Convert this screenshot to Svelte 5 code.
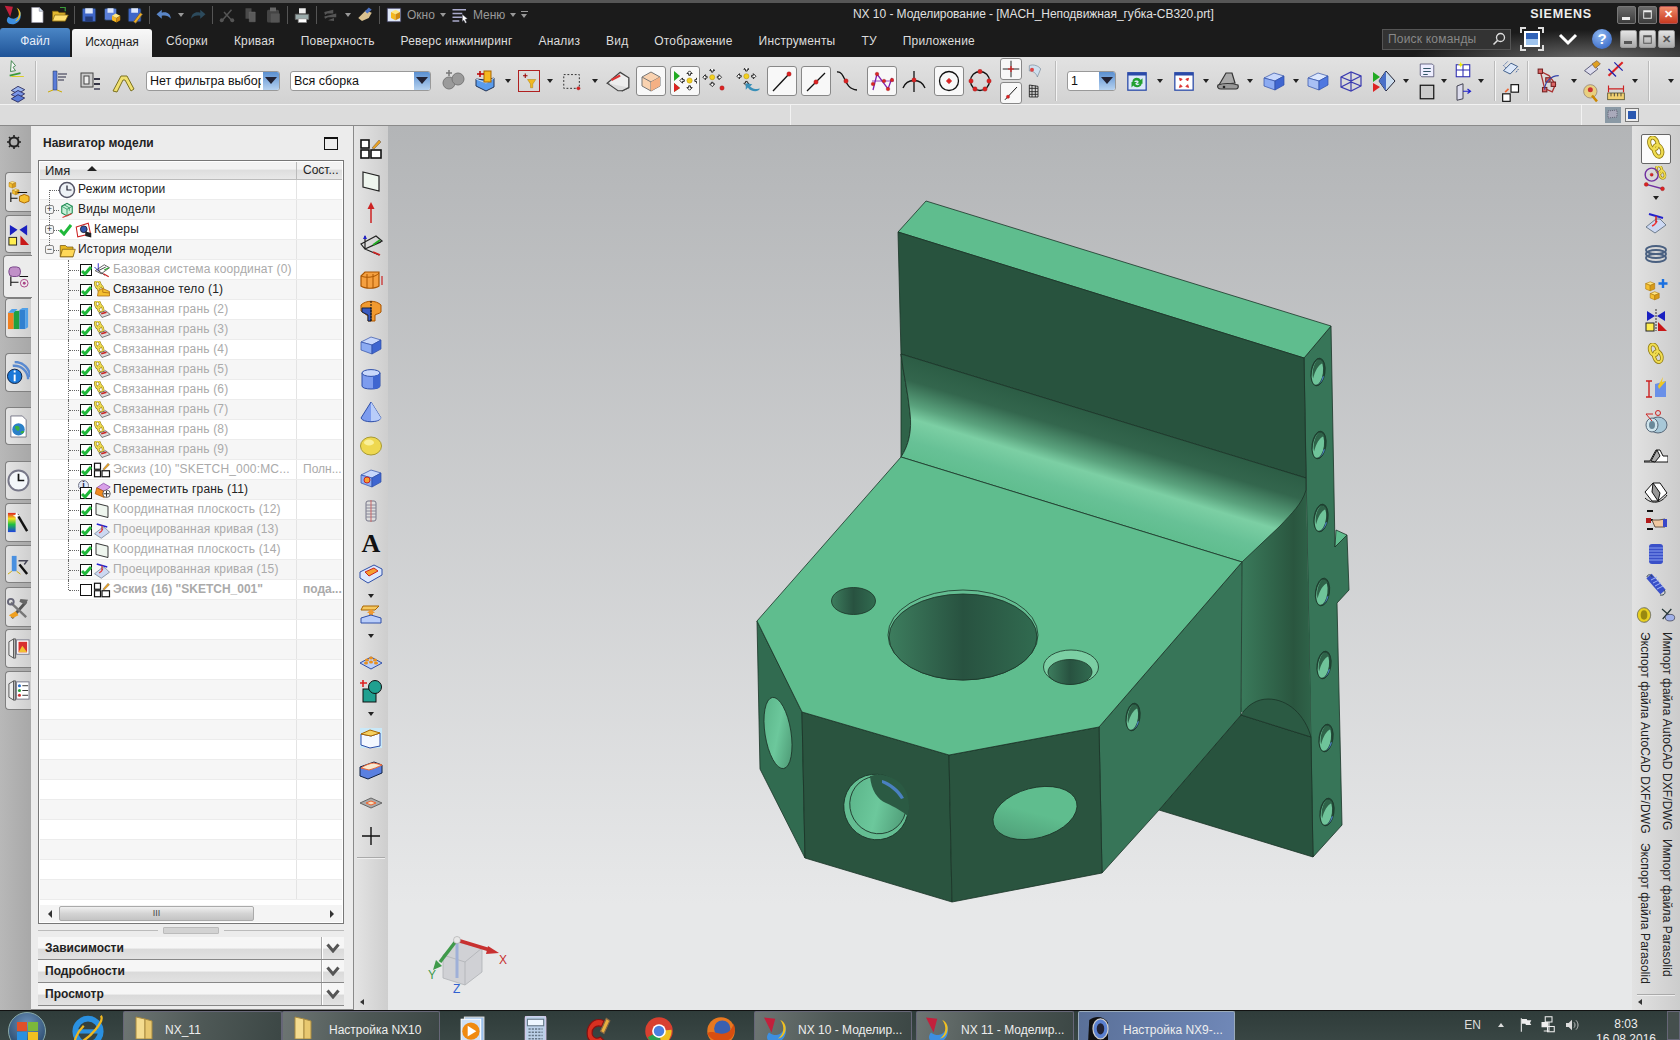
<script>
  // icon artwork, all drawn on a 24x24 grid
  const chain = (x, y, s) =>
    `<g transform="translate(${x} ${y}) scale(${s})" fill="none"><g stroke="#8f7a10" stroke-width="4.4"><ellipse cx="9" cy="8" rx="4.4" ry="6.6" transform="rotate(-18 9 8)"/><ellipse cx="14" cy="16" rx="4.4" ry="6.6" transform="rotate(-18 14 16)"/></g><g stroke="#f0dc50" stroke-width="2.6"><ellipse cx="9" cy="8" rx="4.4" ry="6.6" transform="rotate(-18 9 8)"/><ellipse cx="14" cy="16" rx="4.4" ry="6.6" transform="rotate(-18 14 16)"/></g></g>`;
  const cubeArt = (a, b, c, line) =>
    `<path fill="${a}" stroke="${line}" stroke-width=".7" d="M2 9l10-5 10 3-9 5z"/><path fill="${b}" stroke="${line}" stroke-width=".7" d="M2 9l11 3v9L2 17z"/><path fill="${c}" stroke="${line}" stroke-width=".7" d="M13 12l9-5v9l-9 5z"/>`;
  const cube = cubeArt("#c9d8fb", "#8cabf2", "#3f66d0", "#2f4fa8");
  const goldCubes = `<g stroke="#b07a10" stroke-width=".7"><path fill="#ffe680" d="M3 4l5-2 5 2-5 2z"/><path fill="#f5c030" d="M3 4l5 2v6l-5-2z"/><path fill="#d89a18" d="M8 6l5-2v6l-5 2z"/><path fill="#ffe680" d="M8 15l5-2 5 2-5 2z"/><path fill="#f5c030" d="M8 15l5 2v5l-5-2z"/><path fill="#d89a18" d="M13 17l5-2v5l-5 2z"/></g>`;
  const point = (x, y, r = 1.8) => `<circle cx="${x}" cy="${y}" r="${r}" fill="#d22" stroke="#922" stroke-width=".4"/>`;
  const arrows4 = `<g fill="#fff" stroke="#111" stroke-width="1"><path d="M12 1l3 3h-2v2h-2V4H9z"/><path d="M12 23l3-3h-2v-2h-2v2H9z"/><path d="M1 12l3-3v2h2v2H4v2z"/><path d="M23 12l-3-3v2h-2v2h2v2z"/></g><circle cx="12" cy="12" r="3" fill="#f2d020" stroke="#a80" stroke-width=".5"/>`;
  const sketchBox = `<g fill="#fff" stroke="#111" stroke-width="1.6"><rect x="2" y="3" width="8" height="8"/><rect x="2" y="13" width="8" height="8"/><rect x="12" y="13" width="10" height="8"/></g><path d="M13 11l7-8 2 2-7 7z" fill="#e8a020" stroke="#765" stroke-width=".6"/>`;
  const faceLink = `<g transform="translate(0 -1) scale(.72)">${chain(0, 0, 1)}</g><path d="M8 16l9-3 6 5-11 4z" fill="#ddd" stroke="#555"/><path d="M11 17l7-2" stroke="#c22" stroke-width="1.8"/>`;
  const plane = `<path d="M4 3l16 4v15L4 18z" fill="#eef5ee" stroke="#222" stroke-width="1.2"/>`;
  const projCurve = `<path d="M12 9L2 17l9 6 11-8-6-6z" fill="#ccd8f2" stroke="#567" stroke-width=".8"/><path d="M8 16c3-1 4-3 5-5" stroke="#e33" stroke-width="1.6" fill="none"/><path d="M5 4l14 4" stroke="#22c" stroke-width="2"/><path d="M12 6v6" stroke="#c22" stroke-width="1.5"/>`;
  const treeMark = (c) => `<path d="M4 12v10M4 18h7M11 12h10" stroke="#111" stroke-width="1.2" fill="none"/><g>${c}</g>`;

  const I = {
    nx: `<path d="M4 2l9 1-3 11z" fill="#c2203c"/><path d="M8 14c-4 5 0 9 6 8 6-1 9-7 7-14-1 6-6 11-13 6z" fill="#3d8fe0"/><path d="M17 4c4 5 3 12-2 15 7-1 9-12 2-15z" fill="#f2c020"/>`,
    page: `<path d="M5 2h10l5 5v15H5z" fill="#fff" stroke="#99a" stroke-width="1"/><path d="M15 2v5h5" fill="#cde" stroke="#99a"/>`,
    open: `<path d="M2 7h7l2 2h8v11H2z" fill="#e2b830" stroke="#8a6a10"/><path d="M5 12h18l-4 8H2z" fill="#ffe070" stroke="#8a6a10"/><path d="M12 2h7v5" fill="none" stroke="#3a9a3a" stroke-width="1.6"/>`,
    save: `<rect x="3" y="3" width="18" height="18" rx="2" fill="#3f66c8" stroke="#234"/><rect x="7" y="3" width="10" height="7" fill="#dfe8fa"/><rect x="7" y="14" width="10" height="7" fill="#233a78"/>`,
    saveall: `<rect x="2" y="3" width="16" height="16" rx="2" fill="#5b7fd8" stroke="#234"/><rect x="6" y="3" width="8" height="6" fill="#dfe8fa"/><path d="M12 13l5-3 6 3-5 3z" fill="#ffe680"/><path d="M12 13l6 3v6l-6-3z" fill="#f5b820"/><path d="M18 16l5-3v6l-5 3z" fill="#d08a10"/>`,
    saveas: `<rect x="3" y="3" width="17" height="18" rx="2" fill="#3f66c8" stroke="#234"/><rect x="7" y="3" width="9" height="6" fill="#dfe8fa"/><path d="M10 21l9-12 3 2-9 12z" fill="#f0b020" stroke="#654"/>`,
    undo: `<path d="M21 17c0-7-6-10-12-8V5L2 11l7 6v-4c5-1 9 0 12 4z" fill="#5a86c8"/>`,
    redo: `<path d="M3 17c0-7 6-10 12-8V5l7 6-7 6v-4c-5-1-9 0-12 4z" fill="#2c4a5c"/>`,
    cut: `<path d="M4 21l14-16M20 21L8 8" stroke="#555" stroke-width="2"/><circle cx="5" cy="19" r="2.6" fill="#555"/><circle cx="19" cy="19" r="2.6" fill="#555"/>`,
    copy: `<path d="M6 3h8v14H6z" fill="#4a4a4a"/><path d="M11 8h8v13h-8z" fill="#5a5a5a" stroke="#777" stroke-width=".5"/>`,
    paste: `<rect x="4" y="5" width="16" height="17" rx="2" fill="#444"/><rect x="8" y="2" width="8" height="5" fill="#666"/><rect x="9" y="10" width="12" height="12" fill="#555"/>`,
    print: `<path d="M8 3h9v7H8z" fill="#eee"/><path d="M3 11h18v7H3z" fill="#9aa" stroke="#666"/><path d="M7 17h11v5H7z" fill="#fff" stroke="#888"/>`,
    dim: `<path d="M3 8l12-3v5H7l-3 2zM3 14l16-4v5H8l-4 2zM8 19l8-3v4z" fill="#555"/>`,
    hand: `<path d="M3 16l10-10 8 3-4 7-9 4z" fill="#d8c090"/><path d="M12 7l5-5 4 3-6 5z" fill="#4a70c0"/>`,
    win: `<rect x="3" y="3" width="18" height="18" fill="#dfe8f8" stroke="#446"/><path d="M8 8l6-3 6 3-6 3z" fill="#ffe680"/><path d="M8 8l6 3v8l-6-3z" fill="#f5b820"/><path d="M14 11l6-3v8l-6 3z" fill="#d08a10"/>`,
    menu: `<path d="M2 4h18v2H2zM2 9h13v2H2zM2 14h13v2H2zM2 19h9v2H2z" fill="#aac"/><path d="M15 11l7 6-3 1 2 4-2 1-2-4-2 2z" fill="#fff" stroke="#223" stroke-width=".6"/>`,

    roles: `<path d="M4 2l5 6-3 2 3 4-6 1z" fill="#f8f8f8" stroke="#2a7a3a" stroke-width="1"/><path d="M2 20l13-3" stroke="#3a9a3a" stroke-width="2"/><path d="M4 21h15" stroke="#dc0" stroke-width="1"/>`,
    stack2: `<path d="M4 9l8-5 8 4-8 5z" fill="#9ab4ee" stroke="#225"/><path d="M4 14l8-5 8 4-8 5z" fill="#7a96e8" stroke="#225"/><path d="M4 19l8-5 8 4-8 5z" fill="#5a7cd8" stroke="#225"/>`,
    feat: `<path d="M8 2h4v19H8z" fill="#5a7cd8" stroke="#235" stroke-width=".5"/><path d="M8 21l-5 2M12 21l5 2" stroke="#ca0"/><path d="M13 5h9M13 8h8M13 11h6" stroke="#667" stroke-width="1.4"/>`,
    app: `<rect x="2" y="4" width="12" height="14" fill="#ccc" stroke="#444"/><rect x="5" y="7" width="5" height="8" fill="#eee" stroke="#444"/><path d="M15 10h6M15 15h6" stroke="#334" stroke-width="2"/><path d="M15 20h6" stroke="#667" stroke-width="2"/>`,
    bend: `<path d="M2 22l8-15h6l7 13-3 2-6-11h-2L6 23z" fill="#f0e070" stroke="#7a7020"/>`,
    gear2: `<g fill="#9a9a9a" stroke="#777"><circle cx="7" cy="14" r="6"/><circle cx="16" cy="10" r="6"/></g><path d="M7 1v6M4 4h6" stroke="#777" stroke-width="1.5"/>`,
    addsel: `<path d="M12 11l8-2v9l-8 4-10-5V10z" fill="#5a9cec" stroke="#235"/><path d="M2 10l10 4 8-5" fill="none" stroke="#cde" /><rect x="10" y="2" width="7" height="11" fill="#f5b820" stroke="#a60"/><path d="M3 5h7M6 2v6" stroke="#b00" stroke-width="1.5"/>`,
    filter: `<path d="M4 5h6M7 2v6" stroke="#900" stroke-width="1.4"/><path d="M10 10h11l-4 6v5h-3v-5z" fill="#f0b820" stroke="#a70" stroke-width=".6"/>`,
    rect: `<path d="M3 5h17v15H3z" fill="none" stroke="#222" stroke-dasharray="2 2"/>${point(19, 20)}`,
    tilt: `<path d="M2 14L14 4l8 5v9l-6 3z" fill="#eee" stroke="#444" stroke-width="1.2"/><path d="M2 14l10 7h4l6-3" fill="#ddd" stroke="#444"/><path d="M6 11l8-4" stroke="#d33" stroke-width="2"/>`,
    bbox: `<path d="M3 8l9-5 9 5v9l-9 5-9-5z" fill="#f9d2b0" stroke="#777"/><path d="M3 8l9 5 9-5M12 13v9" fill="none" stroke="#777"/><path d="M12 13l9-5v9l-9 5z" fill="#f4b084"/>`,
    snap: `<path d="M1 2l6 5-6 5zM1 14l6 5-6 4z" fill="#2a2"/><path d="M1 14l6 5-6 4z" fill="#d22"/><g transform="translate(6 1) scale(.88)">${arrows4}</g>`,
    snap2: `<g transform="translate(0 -2) scale(.85)">${arrows4}</g>${point(20, 19, 2.2)}`,
    snap3: `<g transform="translate(0 -2) scale(.8)">${arrows4}</g><path d="M22 19c-1 4-9 3-11-1l-2 2v-6l6 1-2 2c2 2 6 3 9 2z" fill="#3a90b8"/>`,
    lineEnd: `<path d="M3 22L19 5" stroke="#111" stroke-width="1.3"/>${point(19, 5, 2.2)}`,
    lineMid: `<path d="M3 22L21 4" stroke="#111" stroke-width="1.3"/>${point(12, 13, 2.2)}`,
    sCurve: `<path d="M2 3c9-1 6 17 20 18" stroke="#111" stroke-width="1.3" fill="none"/>${point(11, 12, 2.2)}`,
    polyPts: `<path d="M3 21l4-16 11 15 4-11" stroke="#8020b0" stroke-width="1.3" fill="none"/><path d="M2 12l22 0" stroke="#8020b0" stroke-width=".8"/>${point(7, 5)}${point(3, 15)}${point(14, 12)}${point(18, 20)}${point(22, 11)}`,
    arcX: `<path d="M1 19C5 9 19 9 23 19" fill="none" stroke="#111" stroke-width="1.3"/><path d="M12 2v21" stroke="#111" stroke-width="1.3"/>${point(12, 11, 2.2)}`,
    circC: `<circle cx="12" cy="12" r="9.5" fill="none" stroke="#111" stroke-width="1.3"/>${point(12, 12, 2)}<path d="M12 9v6M9 12h6" stroke="#d22"/>`,
    circP: `<circle cx="12" cy="12" r="9.5" fill="none" stroke="#111" stroke-width="1.3"/>${point(12, 2.5, 2.2)}${point(3, 12, 2.2)}${point(21, 12, 2.2)}${point(7, 20, 2.2)}${point(17, 20, 2.2)}`,
    cross: `<path d="M12 1v22M1 12h22" stroke="#111" stroke-width="1.2"/><path d="M12 8v8M8 12h8" stroke="#d22" stroke-width="1.6"/>`,
    lineSm: `<path d="M4 21L20 4" stroke="#111" stroke-width="1.3"/>${point(8, 17, 2.2)}`,
    shade: `<path d="M5 4c6-3 15 1 17 5l-5 12c-1-5-6-9-12-9z" fill="#cfe0ee" stroke="#789"/><circle cx="9" cy="10" r="3" fill="#d44"/>`,
    grid: `<path d="M5 3l13 2v16H5zM5 8h13M5 13h13M5 17h13M9 3v18M14 4v17" fill="none" stroke="#222" stroke-width="1.3"/>`,
    updateV: `<rect x="2" y="3" width="20" height="19" fill="#dce8fa" stroke="#2a4aa8" stroke-width="1.4"/><rect x="2" y="3" width="20" height="3" fill="#2a4aa8"/><path d="M7 13c0-5 7-6 9-2l2-2v6h-6l2-2c-1-2-4-2-5 0zM17 15c0 4-7 5-9 2l-2 2v-6h6l-2 2c1 2 4 2 5 0z" fill="#22a030"/>`,
    fit: `<rect x="2" y="3" width="20" height="19" fill="#fff" stroke="#2a4aa8" stroke-width="1.4"/><rect x="2" y="3" width="20" height="3" fill="#2a4aa8"/><path d="M7 9l3 1-2 2zM17 9l-3 1 2 2zM7 19l3-1-2-2zM17 19l-3-1 2-2z" fill="#d33" stroke="#d33"/>`,
    camSurf: `<path d="M3 16l7-12h6l3 10z" fill="#aaa" stroke="#333" stroke-width="1.2"/><path d="M2 16c5-2 14-2 20 0 1 3-1 4-2 4H5c-3 0-4-2-3-4z" fill="#999" stroke="#333" stroke-width="1.2"/><circle cx="8" cy="18" r="1.3" fill="#222"/>`,
    cube,
    cubeLight: cubeArt("#dce7fd", "#a9c0f4", "#4f78e0", "#2f4fa8"),
    wire: `<g fill="none" stroke="#3a3ab0" stroke-width="1.2"><path d="M2 8l10-5 10 4v10l-10 5-10-4z"/><path d="M2 8l10 4 10-5M12 12v10M2 18l10-5 10 4M12 3v10"/></g>`,
    orient: `<path d="M1 3l7 5-7 5z" fill="#2a2"/><path d="M1 14l7 4-7 5z" fill="#d22"/><path d="M14 2l9 10-9 10-7-10z" fill="#cde" stroke="#223"/><path d="M14 2l-7 10 7 10z" fill="#4a70c8"/>`,
    views: `<path d="M3 4h16l2 2v15H5l-2-2z" fill="#eef" stroke="#446"/><path d="M7 10h10M7 14h10M7 18h6" stroke="#356" stroke-width="1.5"/>`,
    winGrid: `<rect x="3" y="5" width="18" height="16" fill="#fff" stroke="#2a2ab0" stroke-width="1.4"/><path d="M3 12h18M12 5v16" stroke="#2a2ab0" stroke-width="1.4"/><path d="M9 1l1 3 3 1-3 1-1 3-1-3-3-1 3-1z" fill="#ee0"/>`,
    blank: `<rect x="3" y="3" width="18" height="18" fill="#ccc" stroke="#111" stroke-width="1.6"/>`,
    door: `<path d="M4 4l8-3v20l-8 2z" fill="#dde" stroke="#334" stroke-width="1.2"/><path d="M12 11h9M18 8l4 3-4 3" fill="none" stroke="#22c" stroke-width="1.6"/>`,
    moveV: `<path d="M3 14L12 5l8 4-9 9z" fill="#dce8fa" stroke="#247"/><path d="M8 3l-5 5 3 3M21 12l-3 4" fill="none" stroke="#359" stroke-dasharray="2 1"/>`,
    ortho: `<rect x="12" y="2" width="9" height="9" fill="#fff" stroke="#111" stroke-width="1.4"/><rect x="2" y="13" width="9" height="9" fill="#fff" stroke="#111" stroke-width="1.4"/><path d="M5 11l4-4" stroke="#e63" stroke-width="2"/>`,
    graph: `<path d="M4 3l8 4 6 8-3 7-7-3z" fill="none" stroke="#a33" stroke-width="1.2"/><g fill="#d66" stroke="#722"><rect x="2" y="1" width="4" height="4"/><rect x="14" y="13" width="4" height="4"/><rect x="6" y="18" width="4" height="4"/><rect x="9" y="9" width="4" height="4"/></g><path d="M8 20A13 13 0 0 1 21 7" fill="none" stroke="#34a"/>`,
    eyeKey: `<path d="M3 14L13 6l6 6-9 7z" fill="#dde" stroke="#446"/><path d="M12 6l6-4 4 4-6 5z" fill="#e0a020" stroke="#864"/>`,
    wheel: `<circle cx="10" cy="10" r="8" fill="#e8d080" stroke="#987"/><circle cx="10" cy="8" r="3" fill="#c33"/><path d="M12 15l6 7" stroke="#c80" stroke-width="3"/>`,
    dimDbl: `<path d="M3 20L20 4" stroke="#d22" stroke-width="2.5"/><path d="M3 12l9 9M10 4l10 10" stroke="#22a" stroke-width="1.5"/>`,
    ruler: `<rect x="2" y="12" width="20" height="8" fill="#f0d070" stroke="#553"/><path d="M6 12v4M10 12v4M14 12v4M18 12v4" stroke="#333"/><path d="M3 7h18M3 3v8M21 3v8" stroke="#c22" stroke-width="1.4"/>`,

    clock: `<circle cx="12" cy="12" r="10" fill="#eef2f6" stroke="#556" stroke-width="2"/><path d="M12 6v6h6" stroke="#223" stroke-width="1.6" fill="none"/>`,
    viewsT: `<path d="M5 7l7-4 7 4v9l-7 4-7-4z" fill="#c8f0d8" stroke="#1a8a50" stroke-width="1.4"/><path d="M5 7l7 4 7-4M12 11v9M8 5l7 4v4" fill="none" stroke="#1a8a50"/><path d="M6 22l12-5" stroke="#d33" stroke-width="1.5"/>`,
    camT: `<path d="M3 8l16-5 3 14-17 4z" fill="#fff" stroke="#c22" stroke-width="1.4"/><circle cx="13" cy="11" r="4.5" fill="#35a" stroke="#112"/><path d="M15 14l8 2v6l-8-2z" fill="#222"/>`,
    folder: `<path d="M3 6h7l2 2h8v13H3z" fill="#e8b820" stroke="#7a5a10"/><path d="M3 21l3-10h17l-3 10z" fill="#ffd858" stroke="#7a5a10"/>`,
    datum: `<path d="M7 3v10M7 13l-5-5" stroke="#22c" stroke-width="1.2"/><path d="M7 13l10-5M7 13l9 6" stroke="#333" stroke-width="1.2"/><path d="M3 13l12-8 7 4-11 8z" fill="none" stroke="#333"/><path d="M14 17l7 4" stroke="#c22" stroke-width="1.6"/><path d="M15 12l6-3" stroke="#2a2" stroke-width="1.6"/>`,
    linkBody: `<g transform="translate(0 -1) scale(.72)">${chain(0, 0, 1)}</g><path d="M7 13l6-3 9 4v6H6z" fill="#f5c030" stroke="#a86a10"/><path d="M13 10v5l9 1" fill="none" stroke="#a86a10"/>`,
    faceLink,
    sketch: sketchBox,
    move: `<path d="M5 9l9-6 9 5-8 6z" fill="#d8a0e8" stroke="#84a"/><path d="M5 9l10 5v8L3 17z" fill="#f08a20" stroke="#a50"/><circle cx="18" cy="17" r="5" fill="#fff" stroke="#333"/><path d="M18 13v8M14 17h8" stroke="#333" stroke-width="1.4"/>`,
    plane,
    proj: projCurve,

    datumTool: `<path d="M6 3v13M6 16l16-7M6 16l14 6M2 11l15-8 6 5-17 8z" fill="none" stroke="#222" stroke-width="1.2"/><path d="M6 2l-2 4h4z" fill="#22c"/><path d="M14 12l7-5" stroke="#2a2" stroke-width="1.8"/><path d="M14 19l7 3" stroke="#c22" stroke-width="1.8"/>`,
    arrowUp: `<path d="M12 23V7" stroke="#c22" stroke-width="1.5"/><path d="M8.5 9l3.5-7 3.5 7z" fill="#c22"/>`,
    extrude: `<path d="M2 8l4-4h14v14c-4 3-14 3-18 0z" fill="#f5a040" stroke="#a50" stroke-width="1.2"/><path d="M2 8c4 2 14 2 18-3M8 6v14M14 6v14" fill="none" stroke="#a50"/><path d="M23 8v9" stroke="#c22" stroke-width="1.2"/>`,
    revolve: `<path d="M2 6c5-5 15-5 20 0v7c-2 2-5 2-6 3v6H9v-5L2 12z" fill="#f09a30" stroke="#a50"/><path d="M3 9h9v13H9v-6L3 13z" fill="#3a5ac0" stroke="#124"/><path d="M12 2v21" stroke="#111" stroke-dasharray="2 1"/>`,
    cyl: `<path d="M3 6v13c0 4 18 4 18 0V6z" fill="#7d9cee" stroke="#2f4fa8"/><ellipse cx="12" cy="6" rx="9" ry="3.4" fill="#c9d8fb" stroke="#2f4fa8"/><path d="M14 9v13c4 0 7-1 7-3V6c0 1-3 3-7 3z" fill="#3f66d0"/>`,
    cone: `<path d="M12 2L2 18c2 5 18 5 20 0z" fill="#7d9cee" stroke="#2f4fa8"/><path d="M12 2v19c5 0 9-1 10-3z" fill="#b9cdf9"/>`,
    sphere: `<ellipse cx="12" cy="12" rx="10.5" ry="9" fill="#eed850" stroke="#a89a30"/><ellipse cx="10" cy="8.5" rx="5" ry="3" fill="#faf09a"/>`,
    block: `${cube}<circle cx="8" cy="14" r="3" fill="#f5a030" stroke="#c22"/>`,
    thread: `<rect x="7" y="2" width="10" height="20" rx="2" fill="#ddd" stroke="#778"/><path d="M7 6h10M7 9h10M7 12h10M7 15h10M7 18h10" stroke="#889"/><path d="M12 1v22" stroke="#c66"/>`,
    pocket: `<path d="M1 10l14-7 8 4v6L9 21l-8-5z" fill="#dce7fd" stroke="#2f4fa8"/><path d="M6 10l9-4 4 3-9 5z" fill="#f5a030" stroke="#c22"/>`,
    pad: `<path d="M4 4h16l-4 4H2z" fill="#f5c860" stroke="#a60"/><path d="M12 7l4 4h-2v5h-4v-5H8z" fill="#f09a30"/><path d="M2 16l10-3 10 3v5H2z" fill="#b9cdf9" stroke="#2f4fa8"/>`,
    pattern: `<path d="M1 15l11-6 11 6-11 6z" fill="#bcd0f8" stroke="#2f4fa8"/><g fill="#e89020"><ellipse cx="8" cy="12" rx="2" ry="1.6"/><ellipse cx="12" cy="10" rx="2" ry="1.6"/><ellipse cx="16" cy="12" rx="2" ry="1.6"/><ellipse cx="12" cy="14" rx="2" ry="1.6"/><ellipse cx="7" cy="15" rx="2" ry="1.6"/><ellipse cx="17" cy="15" rx="2" ry="1.6"/></g>`,
    unite: `<rect x="4" y="10" width="13" height="13" fill="#20a090" stroke="#111"/><circle cx="16" cy="8" r="6.5" fill="#20a090" stroke="#111"/><path d="M1 4h7M4 1v7" stroke="#d22" stroke-width="1.6"/>`,
    shell: `<path d="M1 2h22v20H1z" fill="#c9e8f8"/><path d="M2 8l10 2 9-3v13l-10 2-9-3z" fill="#f4f8ff" stroke="#2f4fa8"/><path d="M2 8l9-4 10 3-9 3z" fill="#f5d060" stroke="#a60"/>`,
    chamf: `<path d="M1 9l14-5 8 3v8L9 21l-8-3z" fill="#5a80e0" stroke="#124"/><path d="M2 10c4-3 10-5 13-5l8 2c-4 2-9 4-13 5z" fill="#f8e8d0" stroke="#e63"/>`,
    flat: `<path d="M1 12l11-5 11 5-11 5z" fill="#aaa" stroke="#666"/><path d="M7 12l5-2 5 2-5 2z" fill="#f8e0c0" stroke="#e63"/>`,
    plus: `<path d="M12 3v18M3 12h18" stroke="#111" stroke-width="1.4"/>`,

    link: chain(2, 0, 0.85),
    linkCirc: `<g transform="translate(10 -1) scale(.55)">${chain(0, 0, 1)}</g><circle cx="8" cy="8" r="6" fill="none" stroke="#7030a0" stroke-width="1.3"/>${point(8, 8, 1.4)}<path d="M3 17l15 4" stroke="#7030a0" stroke-width="1.2"/>${point(3, 17)}${point(18, 21)}`,
    coil: `<g fill="none" stroke="#4a6080" stroke-width="1.8"><ellipse cx="12" cy="7" rx="10" ry="4"/><ellipse cx="12" cy="11" rx="10" ry="4"/><ellipse cx="12" cy="15" rx="10" ry="4"/></g>`,
    assyAdd: `<g transform="translate(-1 3) scale(.9)">${goldCubes}</g><path d="M19 2v9M14.5 6.5h9" stroke="#1a70e0" stroke-width="2.4"/>`,
    mirror: `<path d="M3 3l8 5-8 5zM21 3l-8 5 8 5z" fill="#1a20c0"/><rect x="2" y="15" width="8" height="8" fill="#ffee50" stroke="#222"/><path d="M14 14l9 9h-9z" fill="#c81818"/><path d="M12 1v22" stroke="#333" stroke-dasharray="2 1"/>`,
    sizeLink: `<path d="M11 8l11-3v16H11z" fill="#6a90e8"/><path d="M14 10L19 1l-1 5 4-1-7 8z" fill="#f0c820"/><path d="M2 5h6M5 5v16M2 21h6" stroke="#c22" stroke-width="1.4"/>`,
    pipe: `<ellipse cx="14" cy="15" rx="9" ry="8" fill="#a8c8d8" stroke="#567"/><ellipse cx="8" cy="15" rx="6" ry="7" fill="#d0e4ec" stroke="#567"/><ellipse cx="8" cy="15" rx="3" ry="4" fill="#6a8899"/><path d="M2 4l6 7M2 4h7" stroke="#c22"/><circle cx="14" cy="3" r="2.5" fill="none" stroke="#c22"/>`,
    slot1: `<path d="M0 16h6l6-11h4l3 6h5v6H0z" fill="#fff" stroke="#111"/><path d="M7 16l6-11 3 6-5 6z" fill="#aaa" stroke="#111"/>`,
    slot2: `<path d="M1 12l8-9h7l7 10-9 8H8z" fill="#fff" stroke="#111"/><path d="M9 3l7 10-2 8-6-9z" fill="#999" stroke="#111"/><path d="M1 18c6 6 16 6 22-3" fill="none" stroke="#111"/>`,
    pick: `<path d="M3 3h6M3 12h6M3 21h6" stroke="#111" stroke-width="2"/><rect x="2" y="10" width="5" height="5" fill="#b01818"/><path d="M8 12h7l6-1v8H11z" fill="#f0c8a0" stroke="#654"/><rect x="19" y="11" width="4" height="8" fill="#3a48c8"/>`,
    spring: `<rect x="5" y="2" width="14" height="20" rx="3" fill="#3a50c8"/><path d="M5 6h14M5 9h14M5 12h14M5 15h14M5 18h14" stroke="#8aa0f0"/>`,
    spring2: `<path d="M5 3l14 16" stroke="#3a50c8" stroke-width="7"/><path d="M7 7l6-3M9 10l6-3M11 13l6-3M13 16l6-3" stroke="#a0b4f8" stroke-width="1"/><path d="M3 4c0-3 5-3 5 0M16 22c5 1 6-3 4-5" fill="none" stroke="#345"/>`,
    impA: `<ellipse cx="12" cy="12" rx="10" ry="11" fill="#e8d020" stroke="#554"/><ellipse cx="12" cy="12" rx="5" ry="7" fill="#998810"/><path d="M12 1c5 0 10 5 10 11s-5 11-10 11" fill="none" stroke="#887"/>`,
    impB: `<path d="M3 3l16 14M17 3L4 18" stroke="#233" stroke-width="1.8"/><ellipse cx="15" cy="16" rx="7" ry="5" fill="#a0b0e8" stroke="#334"/>`,

    rAsm: `<g transform="translate(0 -1) scale(.7)">${goldCubes}</g>${treeMark(`<path d="M13 16l5-2 5 2v5l-5 2-5-2z" fill="#f5c030" stroke="#a60"/>`)}`,
    rCon: `<path d="M3 2l8 5-8 6zM21 2l-8 5 8 6z" fill="#1a20c0"/><rect x="2" y="15" width="8" height="8" fill="#ffee50" stroke="#222"/><path d="M14 13l9 10h-9z" fill="#c81818"/>`,
    rPart: `<rect x="2" y="2" width="12" height="10" rx="4" fill="#c090c8" stroke="#748"/><path d="M13 12h9M4 12v10M4 18h8" stroke="#111" stroke-width="1.2" fill="none"/><circle cx="18" cy="19" r="4" fill="none" stroke="#a48"/><circle cx="18" cy="19" r="1.5" fill="#a48"/>`,
    rBooks: `<rect x="1" y="6" width="6" height="17" fill="#f08020"/><rect x="7" y="4" width="6" height="19" fill="#20a040"/><rect x="13" y="3" width="6" height="20" fill="#3080d0"/><path d="M1 6l4-4h6l-4 4zM13 3l3-2h6v20l-3 2V3z" fill="#50a0e8"/>`,
    rInfo: `<circle cx="8" cy="16" r="7.5" fill="#1a78d8" stroke="#124"/><path d="M7 10h2v2H7zM7 14h2v7H7z" fill="#fff"/><path d="M6 5c9-1 16 6 16 14M8 1c9 0 16 7 16 16" fill="none" stroke="#5a8ad0" stroke-width="2.5"/>`,
    rWeb: `<path d="M4 1h12l4 4v18H4z" fill="#fff" stroke="#778"/><circle cx="12" cy="15" r="6.5" fill="#2a80c8"/><path d="M8 12c3-2 6 0 5 3s-4 1-5-3zM14 18c2-2 3-1 4-1-1 3-3 3-4 1z" fill="#3ab040"/>`,
    rClock: `<circle cx="12" cy="12" r="10.5" fill="#f4f7fa" stroke="#778" stroke-width="2"/><path d="M12 5v7h6" stroke="#111" stroke-width="1.8" fill="none"/>`,
    rRoles: `<defs><linearGradient id="rb" x1="0" y1="0" x2="0" y2="1"><stop offset="0" stop-color="#e02020"/><stop offset=".3" stop-color="#f0e020"/><stop offset=".6" stop-color="#20c040"/><stop offset="1" stop-color="#2040e0"/></linearGradient></defs><rect x="1" y="2" width="8" height="20" fill="url(#rb)"/><path d="M11 4l10 17" stroke="#111" stroke-width="2.6"/><path d="M10 1l1 3 3 1-3 1-1 3-1-3-3-1 3-1z" fill="#fff"/>`,
    rReuse: `<path d="M5 3h5v16H5z" fill="#4a90e0"/><path d="M5 19l-4 3M10 19l4 3" stroke="#ca0"/><path d="M12 8h9l-3 4" fill="none" stroke="#445" stroke-width="1.5"/><path d="M13 12l8 10" stroke="#111" stroke-width="2.5"/>`,
    rTools: `<path d="M5 23L20 6" stroke="#555" stroke-width="3"/><path d="M14 3l8 1-3 5-6-3z" fill="#666"/><path d="M4 7l16 15" stroke="#777" stroke-width="2.5"/><circle cx="4" cy="6" r="3" fill="none" stroke="#667" stroke-width="2"/><path d="M2 20l7-4 3 4-6 3z" fill="#f0a020"/>`,
    rDoorA: `<path d="M2 5l5-3v20l-5-3zM7 2h2v20H7z" fill="#eee" stroke="#555"/><rect x="10" y="3" width="13" height="15" fill="#fff" stroke="#778"/><rect x="12" y="5" width="9" height="11" fill="#d83030"/><path d="M12 16l4-7 5 7z" fill="#f0c030"/>`,
    rDoorB: `<path d="M2 5l5-3v20l-5-3zM7 2h2v20H7z" fill="#eee" stroke="#555"/><rect x="10" y="3" width="13" height="18" fill="#fff" stroke="#778"/><circle cx="13" cy="7" r="1.6" fill="#2a70d0"/><circle cx="13" cy="12" r="1.6" fill="#2aa040"/><circle cx="13" cy="17" r="1.6" fill="#d03030"/><path d="M16 7h6M16 12h6M16 17h6" stroke="#333"/>`,

    ie: `<ellipse cx="12" cy="13" rx="9" ry="9" fill="none" stroke="#2a90e0" stroke-width="4"/><path d="M4 13h16" stroke="#2a90e0" stroke-width="3"/><path d="M21 2c3 3-7 16-17 20-3-1 0-8 5-13" fill="none" stroke="#f0b820" stroke-width="1.6"/>`,
    tFolder: `<path d="M4 2l9 2v20H4z" fill="#f4dc90" stroke="#a88a40"/><path d="M13 4l7 2v18h-7z" fill="#e8c870" stroke="#a88a40"/>`,
    media: `<rect x="5" y="1" width="18" height="23" fill="#9ac0ec" stroke="#ddd"/><rect x="2" y="3" width="18" height="23" fill="#cfe0f6" stroke="#fff"/><circle cx="11" cy="14" r="8" fill="#f08a10"/><path d="M8 9l8 5-8 5z" fill="#fff"/>`,
    calc: `<rect x="3" y="0" width="19" height="26" rx="2" fill="#bcd0e8" stroke="#dce"/><rect x="5" y="3" width="15" height="6" fill="#eef6ff" stroke="#678"/><path d="M6 12h13M6 15h13M6 18h13M6 21h13" stroke="#678" stroke-width="1.6" stroke-dasharray="2 1"/>`,
    cc: `<path d="M18 4C8 0 2 10 4 18c2 6 10 7 14 3l-3-3c-3 2-6 1-7-2-1-5 3-9 8-7z" fill="#d83020" stroke="#811"/><path d="M20 2l-5 11 3 2 5-11z" fill="#e8b040" stroke="#864"/>`,
    chrome: `<circle cx="12" cy="12" r="11" fill="#d84030"/><path d="M12 12L3 17a11 11 0 0 0 11 6z" fill="#2aa050"/><path d="M12 12l10-1a11 11 0 0 1-8 12z" fill="#f0c020"/><circle cx="12" cy="12" r="5.5" fill="#fff"/><circle cx="12" cy="12" r="4.2" fill="#4a80e0"/>`,
    ff: `<circle cx="12" cy="12" r="11" fill="#e87820"/><circle cx="13" cy="10" r="6.5" fill="#3a60b0"/><path d="M1 14c3 6 12 9 19 4 3-3 4-8 2-12-1 6-6 9-11 8S3 12 1 14z" fill="#d84e10"/>`,
    nxcam: `<path d="M5 4c5-4 12-3 15 2v17H4z" fill="#111"/><ellipse cx="14" cy="11" rx="6" ry="8" fill="#5a80d0" stroke="#ccc"/><ellipse cx="14" cy="11" rx="3" ry="4.5" fill="#223"/>`,
    flag: `<path d="M5 2v20" stroke="#eee" stroke-width="1.6"/><path d="M6 3h7l1 2h6l-2 4 2 3h-8l-1-2H6z" fill="#eee"/>`,
    net: `<rect x="7" y="1" width="9" height="7" fill="none" stroke="#eee" stroke-width="1.4"/><rect x="2" y="8" width="9" height="7" fill="#eee"/><path d="M12 8v12M12 20H5" stroke="#eee" stroke-width="1.4"/><rect x="10" y="14" width="9" height="7" fill="none" stroke="#eee" stroke-width="1.4"/>`,
    vol: `<path d="M3 9h4l5-5v16l-5-5H3z" fill="#ddd"/><path d="M15 8c2 2 2 6 0 8M18 5c4 4 4 10 0 14" fill="none" stroke="#ddd" stroke-width="1.2"/>`
  };

  // top toolbar: every item is placed by the x of its centre
  const rawBar = [
    { k: "stack", a: "roles", b: "stack2", c: 18, w: 20, s: 20 },
    { k: "sep", c: 35 },
    { i: "feat", c: 57, s: 24 }, { i: "app", c: 91, s: 24 }, { i: "bend", c: 123, s: 24 },
    { k: "select", t: "Нет фильтра выбор", c: 213, w: 134 },
    { k: "select", t: "Вся сборка", c: 360, w: 141 },
    { i: "gear2", c: 454, s: 24 }, { i: "addsel", c: 486, s: 24 }, { k: "arrow", c: 508 },
    { i: "filter", c: 529, s: 22, red: true }, { k: "arrow", c: 550 },
    { i: "rect", c: 572, s: 22 }, { k: "arrow", c: 595 },
    { i: "tilt", c: 618, s: 26 }, { i: "bbox", c: 651, box: true }, { i: "snap", c: 685, box: true },
    { i: "snap2", c: 714, s: 24 }, { i: "snap3", c: 749, s: 26 },
    { i: "lineEnd", c: 782, box: true }, { i: "lineMid", c: 816, box: true }, { i: "sCurve", c: 847, s: 24 },
    { i: "polyPts", c: 882, box: true }, { i: "arcX", c: 914, s: 24 }, { i: "circC", c: 949, box: true }, { i: "circP", c: 980, s: 24 },
    { k: "boxstack", a: "cross", b: "lineSm", c: 1011, w: 24 },
    { k: "stack", a: "shade", b: "grid", c: 1034, w: 18, s: 16 },
    { k: "sep", c: 1055 },
    { k: "select", t: "1", c: 1091, w: 49 },
    { i: "updateV", c: 1137, s: 22 }, { k: "arrow", c: 1160 },
    { i: "fit", c: 1184, s: 22 }, { k: "arrow", c: 1206 },
    { i: "camSurf", c: 1228, s: 24 }, { k: "arrow", c: 1250 },
    { i: "cube", c: 1274, s: 24 }, { k: "arrow", c: 1296 },
    { i: "cubeLight", c: 1318, s: 24 }, { i: "wire", c: 1351, s: 24 }, { i: "orient", c: 1384, s: 24 }, { k: "arrow", c: 1406 },
    { k: "stack", a: "views", b: "blank", c: 1427, w: 18, s: 18 }, { k: "arrow", c: 1444 },
    { k: "stack", a: "winGrid", b: "door", c: 1463, w: 18, s: 18 }, { k: "arrow", c: 1481 },
    { k: "sep", c: 1494 },
    { k: "stack", a: "moveV", b: "ortho", c: 1511, w: 20, s: 20 },
    { k: "sep", c: 1527 },
    { i: "graph", c: 1549, s: 26 }, { k: "arrow", c: 1574 },
    { k: "stack", a: "eyeKey", b: "wheel", c: 1592, w: 20, s: 20 },
    { k: "stack", a: "dimDbl", b: "ruler", c: 1616, w: 20, s: 20 }, { k: "arrow", c: 1635 },
    { k: "sep", c: 1648 }, { k: "arrow", c: 1671 }
  ];
  const widthOf = (it) => it.w ?? (it.k === "sep" ? 1 : it.k === "arrow" ? 6 : it.box ? 30 : it.red ? 22 : it.s);
  let right = 0;
  const bar = rawBar.map((it) => {
    const w = widthOf(it);
    const gap = Math.round(it.c - w / 2 - right);
    right += gap + w;
    return { ...it, w, gap };
  });

  const quick = [
    ["nx", 22], ["page"], ["open"], "|", ["save"], ["saveall"], ["saveas"], "|", ["undo"], "v", ["redo"], "|",
    ["cut"], ["copy"], ["paste"], "|", ["print"], "|", ["dim"], "v", ["hand"], "|"
  ];

  const tabs = ["Сборки", "Кривая", "Поверхность", "Реверс инжиниринг", "Анализ", "Вид", "Отображение", "Инструменты", "ТУ", "Приложение"];

  const rail = [
    { i: "rAsm", h: 40, top: 46 }, { i: "rCon", h: 38, top: 3 }, { i: "rPart", h: 43, top: 2, on: true }, { i: "rBooks", h: 40, top: 0 },
    { i: "rInfo", h: 39, top: 15 }, { i: "rWeb", h: 38, top: 15 }, { i: "rClock", h: 39, top: 16 }, { i: "rRoles", h: 39, top: 3 },
    { i: "rReuse", h: 38, top: 3 }, { i: "rTools", h: 40, top: 4 }, { i: "rDoorA", h: 39, top: 2 }, { i: "rDoorB", h: 39, top: 3 }
  ];

  const child = (t, icon, o = {}) => ({ t, icon, child: true, check: true, dim: true, ...o });
  const rows = [
    { t: "Режим истории", icon: "clock", top: true },
    { t: "Виды модели", icon: "viewsT", exp: "+", top: true },
    { t: "Камеры", icon: "camT", exp: "+", tick: true, top: true },
    { t: "История модели", icon: "folder", exp: "-", top: true },
    child("Базовая система координат (0)", "datum"),
    child("Связанное тело (1)", "linkBody", { dim: false }),
    ...[2, 3, 4, 5, 6, 7, 8, 9].map((n) => child(`Связанная грань (${n})`, "faceLink")),
    child('Эскиз (10) "SKETCH_000:MC...', "sketch", { st: "Полн..." }),
    child("Переместить грань (11)", "move", { dim: false, info: true }),
    child("Координатная плоскость (12)", "plane"),
    child("Проецированная кривая (13)", "proj"),
    child("Координатная плоскость (14)", "plane"),
    child("Проецированная кривая (15)", "proj"),
    child('Эскиз (16) "SKETCH_001"', "sketch", { check: false, bold: true, st: "пода...", last: true })
  ];
  const emptyRows = Array(15).fill(0);

  const vtool = [
    ["sketch", 149], ["plane", 181], ["arrowUp", 212], ["datumTool", 245], ["extrude", 280], ["revolve", 311], ["cube", 345], ["cyl", 379],
    ["cone", 412], ["sphere", 446], ["block", 478], ["thread", 511], ["A", 544], ["pocket", 574], ["v", 596], ["pad", 614], ["v", 636],
    ["pattern", 660], ["unite", 691], ["v", 714], ["shell", 738], ["chamf", 770], ["flat", 803], ["plus", 836]
  ];

  const rtool = [
    ["proj", 222], ["coil", 255], ["assyAdd", 289], ["mirror", 320], ["link", 355], ["sizeLink", 388],
    ["pipe", 422], ["slot1", 457], ["slot2", 492], ["pick", 520], ["spring", 554], ["spring2", 585]
  ];

  const sections = ["Зависимости", "Подробности", "Просмотр"];

  const plateHoles = [[1318, 372], [1319, 445], [1321, 518], [1322.5, 592], [1324, 665], [1326, 738], [1327, 812], [1133, 717]];
</script>

{#snippet ic(n, s = 24)}
  <svg class="ic" width={s} height={s} viewBox="0 0 24 24">{@html I[n]}</svg>
{/snippet}

<div class="app">
  <header class="top">
    <div class="titlebar">
      <div class="quick">
        {#each quick as q}
          {#if q === "|"}
            <span class="qsep"></span>
          {:else if q === "v"}
            <span class="drop dim"></span>
          {:else}
            {@render ic(q[0], q[1] ?? 18)}
          {/if}
        {/each}
        {@render ic("win", 18)}
        <span class="qtext">Окно</span>
        <span class="drop dim"></span>
        {@render ic("menu", 18)}
        <span class="qtext">Меню</span>
        <span class="drop dim"></span>
        <span class="qcustom"></span>
      </div>
      <div class="title">NX 10 - Моделирование - [MACH_Неподвижная_губка-СВ320.prt]</div>
      <div class="siemens">SIEMENS</div>
      <div class="wbtns">
        <span class="wbtn"><i class="g-min"></i></span>
        <span class="wbtn"><i class="g-max"></i></span>
        <span class="wbtn close">✕</span>
      </div>
    </div>

    <nav class="tabs">
      <span class="file">Файл</span>
      <span class="home">Исходная</span>
      {#each tabs as t}
        <span class="tab">{t}</span>
      {/each}
      <div class="tabs-right">
        <div class="search">
          <span>Поиск команды</span>
          <svg width="14" height="14" viewBox="0 0 14 14"><circle cx="8.5" cy="5.5" r="4" fill="none" stroke="#ddd" stroke-width="1.3"/><path d="M5.5 8.5L1.5 12.5" stroke="#ddd" stroke-width="1.6"/></svg>
        </div>
        <svg class="fullscreen" width="24" height="24" viewBox="0 0 24 24">
          <path d="M1 6V1h5M18 1h5v5M23 18v5h-5M6 23H1v-5" fill="none" stroke="#ddd" stroke-width="2"/>
          <rect x="5" y="5" width="14" height="14" fill="#2f62b8" stroke="#fff" stroke-width="2"/>
          <rect x="6" y="12" width="12" height="6" fill="#9fc4ee"/>
        </svg>
        <svg class="chevron" width="20" height="14" viewBox="0 0 20 14"><path d="M2 3l8 8 8-8" fill="none" stroke="#fff" stroke-width="3"/></svg>
        <span class="help">?</span>
        <div class="wbtns small">
          <span class="wbtn"><i class="g-min"></i></span>
          <span class="wbtn"><i class="g-max"></i></span>
          <span class="wbtn">✕</span>
        </div>
      </div>
    </nav>

    <div class="toolbar">
      {#each bar as it}
        {#if it.k === "sep"}
          <span class="tsep" style="margin-left:{it.gap}px"></span>
        {:else if it.k === "arrow"}
          <span class="tarrow" style="margin-left:{it.gap}px"></span>
        {:else if it.k === "select"}
          <span class="select" style="margin-left:{it.gap}px;width:{it.w}px">
            <span class="select-text">{it.t}</span>
            <span class="select-btn"></span>
          </span>
        {:else if it.k === "stack"}
          <span class="stack" style="margin-left:{it.gap}px;width:{it.w}px">
            {@render ic(it.a, it.s)}
            {@render ic(it.b, it.s)}
          </span>
        {:else if it.k === "boxstack"}
          <span class="stack tight" style="margin-left:{it.gap}px;width:{it.w}px">
            <span class="boxlet">{@render ic(it.a, 18)}</span>
            <span class="boxlet">{@render ic(it.b, 18)}</span>
          </span>
        {:else if it.box}
          <span class="boxed" style="margin-left:{it.gap}px">{@render ic(it.i, 24)}</span>
        {:else if it.red}
          <span class="redbox" style="margin-left:{it.gap}px">{@render ic(it.i, 18)}</span>
        {:else}
          <span class="tool" style="margin-left:{it.gap}px">{@render ic(it.i, it.s)}</span>
        {/if}
      {/each}
    </div>

    <div class="strip">
      <span class="strip-a"></span>
      <span class="strip-b"></span>
      <span class="strip-flag">
        <svg width="16" height="16" viewBox="0 0 16 16"><rect width="16" height="16" fill="#8a99a5"/><path d="M3 4l9-1v7l-9 1z" fill="#aab" stroke="#667" stroke-dasharray="1 1"/></svg>
      </span>
      <span class="strip-full"><i></i></span>
    </div>
  </header>

  <main class="body">
    <aside class="rail">
      <svg class="gear" width="16" height="16" viewBox="0 0 16 16">
        <circle cx="8" cy="8" r="4.5" fill="none" stroke="#222" stroke-width="2"/>
        <path d="M8 1v3M8 12v3M1 8h3M12 8h3M3 3l2 2M11 11l2 2M13 3l-2 2M5 11l-2 2" stroke="#222" stroke-width="1.6"/>
      </svg>
      {#each rail as r}
        <div class="rail-tab" class:on={r.on} style="height:{r.h}px;margin-top:{r.top}px">
          {@render ic(r.i, 23)}
        </div>
      {/each}
    </aside>

    <section class="panel">
      <div class="panel-title">
        <b>Навигатор модели</b>
        <span class="panel-box"></span>
      </div>

      <div class="tree">
        <div class="tree-head">
          <span class="col-name">Имя <i class="sort"></i></span>
          <span class="col-state">Сост...</span>
        </div>
        <div class="tree-rows">
          {#each rows as r, n}
            <div class="row" class:alt={n % 2 === 1} class:child={r.child} class:last={r.last} class:top={r.top} class:first={n === 0} class:lastTop={n === 3}>
              <div class="name">
                {#if r.exp}
                  <span class="exp">{r.exp === "+" ? "+" : "−"}</span>
                {/if}
                {#if r.tick}
                  <svg class="tick" width="13" height="13" viewBox="0 0 13 13"><path d="M1 7l4 4 7-9" fill="none" stroke="#1fb83a" stroke-width="3"/></svg>
                {/if}
                {#if r.check !== undefined}
                  <span class="check" class:raised={r.info}>
                    {#if r.check}<svg width="11" height="11" viewBox="0 0 11 11"><path d="M1 6l3 3 6-7" fill="none" stroke="#1fb83a" stroke-width="3"/></svg>{/if}
                  </span>
                {/if}
                {#if r.info}<span class="info">i</span>{/if}
                <span class="row-icon">{@render ic(r.icon, 18)}</span>
                <span class="label" class:dim={r.dim} class:bold={r.bold}>{r.t}</span>
              </div>
              <div class="state" class:bold={r.bold}>{r.st ?? ""}</div>
            </div>
          {/each}
          {#each emptyRows as _, n}
            <div class="row" class:alt={(n + rows.length) % 2 === 1}>
              <div class="name"></div>
              <div class="state"></div>
            </div>
          {/each}
        </div>
        <div class="hscroll">
          <i class="arr left"></i>
          <div class="thumb"><span>III</span></div>
          <i class="arr right"></i>
        </div>
      </div>

      <div class="splitter"><span></span><b></b><span></span></div>

      {#each sections as s}
        <div class="sec">
          <b>{s}</b>
          <span class="chev">
            <svg width="14" height="10" viewBox="0 0 14 10"><path d="M1.5 1.5L7 8l5.5-6.5" fill="none" stroke="#555" stroke-width="3"/></svg>
          </span>
        </div>
      {/each}
    </section>

    <aside class="vtool">
      <div class="vtool-stack">
        {#each vtool as v, n}
          {@const prev = n ? vtool[n - 1] : null}
          {@const h = v[0] === "v" ? 6 : 24}
          {@const prevBottom = prev ? prev[1] + (prev[0] === "v" ? 3 : 12) : 126}
          <div class="vt" style="height:{h}px;margin-top:{v[1] - h / 2 - prevBottom}px">
            {#if v[0] === "v"}
              <span class="tarrow"></span>
            {:else if v[0] === "A"}
              <span class="big-a">A</span>
            {:else}
              {@render ic(v[0], 24)}
            {/if}
          </div>
        {/each}
        <div class="vt-line"></div>
      </div>
      <i class="arr left corner"></i>
    </aside>

    <div class="viewport">
      <svg class="model" viewBox="388 126 1244 884" preserveAspectRatio="none">
        <defs>
          <linearGradient id="fillet" gradientUnits="userSpaceOnUse" x1="1100" y1="415" x2="1071" y2="511">
            <stop offset="0" stop-color="#2c5d45"/>
            <stop offset=".22" stop-color="#33664d"/>
            <stop offset=".45" stop-color="#5aa27d"/>
            <stop offset=".58" stop-color="#7ccfa4"/>
            <stop offset=".8" stop-color="#67c196"/>
            <stop offset="1" stop-color="#5fbd8e"/>
          </linearGradient>
          <linearGradient id="bore" x1="0" y1="0" x2="1" y2="0">
            <stop offset="0" stop-color="#3d7d5e"/>
            <stop offset=".5" stop-color="#285240"/>
            <stop offset="1" stop-color="#316b50"/>
          </linearGradient>
          <linearGradient id="column" x1="0" y1="0" x2="1" y2="0">
            <stop offset="0" stop-color="#3a7a5b"/>
            <stop offset=".75" stop-color="#2a563f"/>
            <stop offset="1" stop-color="#2f6349"/>
          </linearGradient>
          <linearGradient id="lit" x1="0" y1="1" x2="1" y2="0">
            <stop offset="0" stop-color="#4a9672"/>
            <stop offset=".5" stop-color="#5fbd8e"/>
            <stop offset="1" stop-color="#5fbd8e"/>
          </linearGradient>
          <linearGradient id="lit2" x1="0" y1="0" x2="1" y2="1">
            <stop offset="0" stop-color="#57b085"/>
            <stop offset=".5" stop-color="#6cc89c"/>
            <stop offset="1" stop-color="#468f6c"/>
          </linearGradient>
        </defs>

        <g stroke="#1b3327" stroke-width=".8" stroke-linejoin="round">
          <!-- upright plate -->
          <path fill="#377558" d="M1331 326L1335 547L1347 535L1349 590L1337 603L1342 825L1313 857L1304 358Z"/>
          <path fill="#5fbd8e" d="M1336 530L1347 535L1335 547Z"/>
          <path fill="#5fbd8e" d="M926 201L1331 326L1304 358L898 232Z"/>
          <path fill="#28533e" d="M898 232L1304 358L1306 478L901 354Z"/>
          <!-- column under the plate -->
          <path fill="url(#column)" stroke="none" d="M1242 562L1306 480L1311 737L1241 712Z"/>
          <path fill="#28533e" d="M1241 715L1311 737L1313 857L1159 810Z"/>
          <path fill="#2b5a43" d="M1241 715C1248 704 1258 699 1268 699C1288 699 1305 715 1311 737Z"/>
          <!-- fillet -->
          <path fill="#2f6349" d="M901 354L901 457C909 445 912 430 910 413C908 392 903 372 901 354Z"/>
          <path fill="url(#fillet)" d="M901 354L1306 478L1306 490C1302 504 1292 513 1280 526L1242 562L901 457C909 445 912 430 910 413C908 392 903 372 901 354Z"/>
          <!-- chamfer faces -->
          <path fill="#377558" d="M1099 727L1242 562L1241 715L1159 810L1102 873Z"/>
          <path fill="#316b50" d="M757 621L802 712L805 858L760 769Z"/>
          <path fill="#2a543f" d="M802 712L949 755L952 902L805 858Z"/>
          <path fill="#2a543f" d="M949 755L1099 727L1102 873L952 902Z"/>
          <path fill="#5fbd8e" d="M901 457L1242 562L1099 727L949 755L802 712L757 621Z"/>
        </g>

        <!-- holes in the top face -->
        <g stroke="#1b3327" stroke-width=".8">
          <ellipse cx="853.5" cy="601" rx="22" ry="13.5" fill="url(#bore)"/>
          <ellipse cx="963" cy="635" rx="75" ry="45" fill="#64bd92"/>
          <ellipse cx="963" cy="637" rx="74" ry="43" fill="url(#bore)"/>
          <ellipse cx="1071" cy="667" rx="27.5" ry="17" fill="#7ccfa4"/>
          <ellipse cx="1070" cy="672" rx="22" ry="12.5" fill="url(#bore)"/>
          <!-- holes in the lower faces -->
          <ellipse cx="778" cy="733" rx="13" ry="36" transform="rotate(-9 778 733)" fill="url(#lit2)"/>
          <ellipse cx="876" cy="807" rx="32" ry="33" transform="rotate(-30 876 807)" fill="#64bd92"/>
          <ellipse cx="878" cy="805" rx="28" ry="29" transform="rotate(-30 878 805)" fill="url(#lit2)"/>
          <path fill="#2b5a43" stroke="none" d="M870 776C871 790 878 800 886 803C895 807 903 812 908 816C911 805 908 790 900 783C892 776 880 772 870 776Z"/>
          <path fill="#4a80c0" stroke="none" d="M882 780C890 782 900 790 904 798L901 799C896 791 889 786 882 783Z"/>
          <ellipse cx="1035" cy="813" rx="43" ry="25" transform="rotate(-15 1035 813)" fill="url(#lit)"/>
        </g>
        <!-- little screw holes along the plate and the chamfer -->
        {#each plateHoles as p}
          <g transform="translate({p[0]} {p[1]}) rotate(8)">
            <ellipse rx="7" ry="14" fill="#234a38" stroke="#1b3327" stroke-width=".7"/>
            <ellipse cx="-.5" cy=".5" rx="5.5" ry="12.5" fill="#6fc49a"/>
            <path d="M-2 -12C-6 -7 -6 2 -4 7C-3 -1 -1 -7 4 -10C2 -12 0 -13 -2 -12Z" fill="#2f6349"/>
            <path d="M5 4C5 9 3 13 -1 13C2 13 6 10 6.5 3Z" fill="#4a80c0"/>
          </g>
        {/each}

        <!-- view triad -->
        <g>
          <path d="M443 955L457 942L482 948L482 972L465 985L443 978Z" fill="#c8cace" fill-opacity=".75" stroke="#aeb1b5" stroke-width=".8"/>
          <path d="M443 955L465 962L482 948M465 962V985" fill="none" stroke="#aeb1b5" stroke-width=".8"/>
          <path d="M457 940V978" stroke="#9fb0d8" stroke-width="3"/>
          <path d="M457 940L490 950" stroke="#c83030" stroke-width="3.4"/>
          <path d="M488 946L499 953L486 954Z" fill="#c83030"/>
          <path d="M456 941L440 962" stroke="#3f9a4a" stroke-width="3.4"/>
          <path d="M436 960L442 966L433 970Z" fill="#3f9a4a"/>
          <circle cx="457" cy="940" r="3.5" fill="#e8e8e8" stroke="#999" stroke-width=".5"/>
          <text class="axis" x="499" y="964" fill="#c83030">X</text>
          <text class="axis" x="428" y="979" fill="#3f9a4a">Y</text>
          <text class="axis" x="453" y="993" fill="#3060d0">Z</text>
        </g>
      </svg>
    </div>

    <aside class="rtool">
      <div class="rtool-icons">
        <span class="rbox">{@render ic("link", 26)}</span>
        <span class="rt r-first">{@render ic("linkCirc", 26)}</span>
        <span class="tarrow r-arrow"></span>
        {#each rtool as v, n}
          <span class="rt" style="margin-top:{n === 0 ? 10 : v[1] - rtool[n - 1][1] - 24}px">{@render ic(v[0], 24)}</span>
        {/each}
        <div class="rpair">
          {@render ic("impA", 16)}
          {@render ic("impB", 16)}
        </div>
      </div>
      <div class="rtexts">
        <div class="vcol"><span>Экспорт файла AutoCAD DXF/DWG</span><span>Экспорт файла Parasolid</span></div>
        <div class="vcol"><span>Импорт файла AutoCAD DXF/DWG</span><span>Импорт файла Parasolid</span></div>
      </div>
      <div class="rline"></div>
      <i class="arr left corner"></i>
    </aside>
  </main>

  <footer class="taskbar">
    <span class="orb"><i class="q1"></i><i class="q2"></i><i class="q3"></i><i class="q4"></i></span>
    <span class="tb-ie">{@render ic("ie", 34)}</span>
    <div class="tb-group">
      <div class="tb-win w1">{@render ic("tFolder", 24)}<span>NX_11</span></div>
      <div class="tb-win w2">{@render ic("tFolder", 24)}<span>Настройка NX10</span></div>
    </div>
    <span class="tb-media">{@render ic("media", 26)}</span>
    <span class="tb-calc">{@render ic("calc", 26)}</span>
    <span class="tb-cc">{@render ic("cc", 28)}</span>
    <span class="tb-chrome">{@render ic("chrome", 30)}</span>
    <span class="tb-ff">{@render ic("ff", 30)}</span>
    <div class="tb-win w3">{@render ic("nx", 30)}<span>NX 10 - Моделир...</span></div>
    <div class="tb-win w4">{@render ic("nx", 30)}<span>NX 11 - Моделир...</span></div>
    <div class="tb-win w5">{@render ic("nxcam", 30)}<span>Настройка NX9-...</span></div>
    <div class="tray">
      <span class="lang">EN</span>
      <span class="tray-up"></span>
      {@render ic("flag", 16)}
      {@render ic("net", 18)}
      {@render ic("vol", 16)}
      <div class="clock"><span>8:03</span><span>16.08.2016</span></div>
    </div>
    <span class="desk"></span>
  </footer>
</div>

<style>
  :global(body) {
    margin: 0;
    background: #222;
  }

  .app {
    width: 1680px;
    height: 1040px;
    display: flex;
    flex-direction: column;
    overflow: hidden;
    font-family: "Liberation Sans", Arial, sans-serif;
    font-size: 12px;
    color: #222;
  }

  .ic {
    display: block;
    flex: none;
  }

  /* title row */
  .top {
    flex: none;
  }

  .titlebar {
    height: 23px;
    border-top: 3px solid #565656;
    background: #1b1b1b;
    display: flex;
    align-items: center;
    color: #ddd;
    position: relative;
  }

  .quick {
    width: 853px;
    flex: none;
    display: flex;
    align-items: center;
    gap: 5px;
    padding-left: 1px;
    box-sizing: border-box;
  }

  .qsep {
    width: 1px;
    height: 18px;
    background: #555;
  }

  .qtext {
    color: #999;
    margin-left: -1px;
  }

  .drop {
    width: 0;
    height: 0;
    border: 3px solid transparent;
    border-top: 4px solid #222;
    border-bottom: 0;
  }

  .drop.dim {
    border-top-color: #999;
  }

  .qcustom {
    width: 7px;
    height: 6px;
    border-top: 1px solid #999;
    position: relative;
  }

  .qcustom::after {
    content: "";
    position: absolute;
    left: 0;
    top: 2px;
    border: 3px solid transparent;
    border-top: 4px solid #999;
    border-bottom: 0;
  }

  .title {
    white-space: nowrap;
    font-size: 12px;
    color: #e0e0e0;
    letter-spacing: -0.05px;
    padding-bottom: 2px;
  }

  .siemens {
    margin-left: auto;
    margin-right: 25px;
    font-weight: bold;
    letter-spacing: 0.8px;
    font-size: 12.5px;
    color: #eee;
    padding-bottom: 1px;
  }

  .wbtns {
    display: flex;
    gap: 2px;
    margin-right: 2px;
  }

  .wbtn {
    width: 19px;
    height: 18px;
    border-radius: 2px;
    background: linear-gradient(#6a6a6a, #3c3c3c);
    border: 1px solid #777;
    box-sizing: border-box;
    color: #eee;
    font-size: 11px;
    font-weight: bold;
    display: flex;
    align-items: center;
    justify-content: center;
    position: relative;
  }

  .wbtn.close {
    background: linear-gradient(#ef8a6a, #c83a20);
    border-color: #a55;
    color: #fff;
  }

  .g-min {
    position: absolute;
    left: 4px;
    bottom: 3px;
    width: 8px;
    height: 3px;
    background: #eee;
  }

  .g-max {
    width: 7px;
    height: 6px;
    border: 1px solid #eee;
    border-top-width: 2px;
    box-sizing: content-box;
    transform: scale(0.95);
  }

  .wbtns.small {
    margin-right: 5px;
    margin-left: 8px;
    gap: 2px;
  }

  .wbtns.small .wbtn {
    width: 17px;
    background: linear-gradient(#e4e4e4, #aaa);
    border-color: #999;
    color: #555;
  }

  .wbtns.small .g-min {
    background: #555;
    left: 3px;
  }

  .wbtns.small .g-max {
    border-color: #555;
  }

  /* ribbon tabs */
  .tabs {
    height: 31px;
    background: radial-gradient(180px 30px at 1590px 34px, #6a6a6a, transparent), #1b1b1b;
    display: flex;
    align-items: flex-end;
    color: #ddd;
  }

  .tabs > .tab {
    padding: 0 13px;
    height: 29px;
    line-height: 27px;
    white-space: nowrap;
    letter-spacing: 0.18px;
  }

  .file {
    width: 70px;
    height: 29px;
    line-height: 27px;
    text-align: center;
    color: #e8eef8;
    background: linear-gradient(#4a86c6, #1f5397);
    border-radius: 3px 3px 0 0;
  }

  .home {
    margin: 0 1px 0 2px;
    width: 80px;
    height: 28px;
    line-height: 26px;
    text-align: center;
    color: #222;
    background: linear-gradient(#f8f8f8, #e4e4e4);
    border-radius: 3px 3px 0 0;
  }

  .tabs-right {
    margin-left: auto;
    align-self: stretch;
    display: flex;
    align-items: center;
    padding-bottom: 5px;
  }

  .search {
    width: 129px;
    height: 21px;
    box-sizing: border-box;
    border: 1px solid #555;
    background: #333;
    color: #888;
    display: flex;
    align-items: center;
    justify-content: space-between;
    padding: 0 4px 0 5px;
    letter-spacing: 0.2px;
  }

  .fullscreen {
    margin-left: 9px;
    flex: none;
  }

  .chevron {
    margin-left: 14px;
    flex: none;
  }

  .help {
    margin-left: 14px;
    width: 20px;
    height: 20px;
    border-radius: 50%;
    background: radial-gradient(circle at 40% 30%, #8fb8f0, #2a5cc0);
    color: #fff;
    font-weight: bold;
    font-size: 15px;
    text-align: center;
    line-height: 20px;
  }

  /* main toolbar */
  .toolbar {
    height: 47px;
    background: linear-gradient(#e2e2e2, #d2d2d2);
    border-bottom: 1px solid #f2f2f2;
    display: flex;
    align-items: center;
  }

  .tsep {
    width: 1px;
    height: 40px;
    background: #bbb;
    box-shadow: 1px 0 #f4f4f4;
    flex: none;
  }

  .tarrow {
    display: block;
    flex: none;
    width: 0;
    height: 0;
    border: 3px solid transparent;
    border-top: 4px solid #222;
    border-bottom: 0;
  }

  .tool {
    flex: none;
  }

  .boxed {
    flex: none;
    width: 30px;
    height: 30px;
    box-sizing: border-box;
    background: #f8f8f8;
    border: 1px solid #888;
    border-radius: 3px;
    display: flex;
    align-items: center;
    justify-content: center;
  }

  .redbox {
    flex: none;
    width: 22px;
    height: 22px;
    box-sizing: border-box;
    border: 1px solid #b02020;
    display: flex;
    align-items: center;
    justify-content: center;
  }

  .select {
    flex: none;
    height: 20px;
    box-sizing: border-box;
    background: #fff;
    border: 1px solid #999;
    border-radius: 3px;
    display: flex;
    align-items: stretch;
    overflow: hidden;
  }

  .select-text {
    flex: 1;
    padding: 2px 0 2px 3px;
    margin-right: 2px;
    color: #111;
    font-size: 12.5px;
    white-space: nowrap;
    overflow: hidden;
    min-width: 0;
  }

  .select-btn {
    width: 16px;
    flex: none;
    background: linear-gradient(#5a8fd0, #b6d2f0);
    position: relative;
  }

  .select-btn::after {
    content: "";
    position: absolute;
    left: 2px;
    top: 5px;
    border: 6px solid transparent;
    border-top: 7px solid #223;
    border-bottom: 0;
  }

  .stack {
    flex: none;
    display: flex;
    flex-direction: column;
    align-items: center;
    gap: 4px;
  }

  .stack.tight {
    gap: 2px;
  }

  .boxlet {
    width: 22px;
    height: 22px;
    box-sizing: border-box;
    background: #f8f8f8;
    border: 1px solid #888;
    border-radius: 3px;
    display: flex;
    align-items: center;
    justify-content: center;
  }

  /* thin strip under the toolbar */
  .strip {
    height: 20px;
    background: #dcdcdc;
    border-bottom: 1px solid #8a8a8a;
    display: flex;
    align-items: center;
  }

  .strip-a {
    width: 791px;
    height: 100%;
    border-right: 1px solid #f2f2f2;
    flex: none;
    box-sizing: border-box;
  }

  .strip-b {
    width: 791px;
    height: 100%;
    border-right: 1px solid #f2f2f2;
    flex: none;
    box-sizing: border-box;
  }

  .strip-flag {
    margin-left: 23px;
    height: 16px;
  }

  .strip-full {
    margin-left: 4px;
    width: 14px;
    height: 14px;
    box-sizing: border-box;
    border: 1px solid #777;
    padding: 2px;
    background: #eee;
  }

  .strip-full i {
    display: block;
    width: 100%;
    height: 100%;
    background: #2a58b0;
  }

  /* body */
  .body {
    flex: 1;
    min-height: 0;
    display: flex;
  }

  .rail {
    width: 31px;
    flex: none;
    background: linear-gradient(90deg, #b8b8b8, #a8a8a8);
    position: relative;
    display: flex;
    flex-direction: column;
    align-items: flex-end;
  }

  .gear {
    position: absolute;
    left: 6px;
    top: 8px;
  }

  .rail-tab {
    width: 26px;
    flex: none;
    box-sizing: border-box;
    background: linear-gradient(90deg, #e4e4e4, #cfcfcf);
    border: 1px solid #808080;
    border-right: 0;
    border-radius: 4px 0 0 4px;
    display: flex;
    align-items: center;
    justify-content: center;
  }

  .rail-tab.on {
    width: 29px;
    background: #ececec;
    position: relative;
    z-index: 1;
    margin-right: -1px;
  }

  .panel {
    width: 323px;
    flex: none;
    box-sizing: border-box;
    background: #ececec;
    border-right: 1px solid #8a8a8a;
    border-bottom: 1px solid #8a8a8a;
    padding: 0 9px 3px 7px;
    display: flex;
    flex-direction: column;
  }

  .panel-title {
    height: 34px;
    flex: none;
    display: flex;
    align-items: center;
    justify-content: space-between;
    padding: 0 6px 0 5px;
    box-sizing: border-box;
  }

  .panel-box {
    width: 12px;
    height: 10px;
    border: 1px solid #111;
    border-top-width: 2px;
    box-sizing: content-box;
  }

  .tree {
    flex: 1;
    min-height: 0;
    border: 1px solid #777;
    display: flex;
    flex-direction: column;
    background: #fff;
    box-sizing: border-box;
    padding: 1px;
  }

  .tree-head {
    height: 17px;
    flex: none;
    display: grid;
    grid-template-columns: 256px 1fr;
    background: linear-gradient(#f3f3f3 40%, #dedede 50%, #e8e8e8);
    border-bottom: 1px solid #bbb;
    line-height: 17px;
  }

  .col-name {
    padding-left: 5px;
    position: relative;
    font-size: 13px;
  }

  .sort {
    position: absolute;
    left: 47px;
    top: 4px;
    border: 5px solid transparent;
    border-bottom: 5px solid #222;
    border-top: 0;
  }

  .col-state {
    padding-left: 6px;
    border-left: 1px solid #bbb;
  }

  .tree-rows {
    flex: 1;
    min-height: 0;
    overflow: hidden;
  }

  .row {
    height: 20px;
    box-sizing: border-box;
    display: grid;
    grid-template-columns: 256px 1fr;
    background: #fff;
    border-bottom: 1px solid #ececec;
    line-height: 19px;
    position: relative;
  }

  .row.alt {
    background: #f6f6f6;
  }

  .state {
    border-left: 1px solid #e4e4e4;
    padding-left: 6px;
    color: #aaa;
    white-space: nowrap;
    overflow: hidden;
  }

  .state.bold {
    font-weight: bold;
  }

  .name {
    display: flex;
    align-items: center;
    position: relative;
    padding-left: 19px;
    min-width: 0;
  }

  /* dotted tree connectors */
  .row.top::before {
    content: "";
    position: absolute;
    left: 9px;
    top: 0;
    bottom: 0;
    border-left: 1px dotted #666;
  }

  .row.first::before {
    top: 10px;
  }

  .row.lastTop::before {
    bottom: 10px;
  }

  .row.top::after {
    content: "";
    position: absolute;
    left: 10px;
    top: 10px;
    width: 9px;
    border-top: 1px dotted #666;
  }

  .row.child::before {
    content: "";
    position: absolute;
    left: 28px;
    top: 0;
    bottom: -1px;
    border-left: 1px dotted #666;
  }

  .row.child.last::before {
    bottom: 9px;
  }

  .row.child::after {
    content: "";
    position: absolute;
    left: 29px;
    top: 10px;
    width: 10px;
    border-top: 1px dotted #666;
  }

  .row.child .name {
    padding-left: 40px;
  }

  .exp {
    position: absolute;
    left: 5px;
    top: 5px;
    z-index: 1;
    width: 9px;
    height: 9px;
    box-sizing: border-box;
    border: 1px solid #888;
    border-radius: 2px;
    background: #f4f4f4;
    font-size: 9px;
    line-height: 6px;
    text-align: center;
    color: #222;
  }

  .tick {
    flex: none;
    margin-right: 3px;
  }

  .check {
    width: 12px;
    height: 12px;
    flex: none;
    box-sizing: border-box;
    border: 1px solid #111;
    background: #fff;
    margin-right: 1px;
    z-index: 1;
  }

  .check svg {
    display: block;
  }

  .check.raised {
    transform: translateY(3px);
  }

  .info {
    position: absolute;
    left: 38px;
    top: 0;
    width: 11px;
    height: 11px;
    border-radius: 50%;
    background: #dfe8f8;
    border: 1px solid #778;
    box-sizing: border-box;
    color: #224;
    font-size: 9px;
    font-weight: bold;
    line-height: 9px;
    text-align: center;
  }

  .row-icon {
    flex: none;
    width: 18px;
    margin-right: 2px;
  }

  .row.top .row-icon {
    margin-left: -1px;
  }

  .label {
    white-space: nowrap;
    color: #222;
    letter-spacing: 0.18px;
  }

  .label.dim {
    color: #aaa;
  }

  .label.bold {
    font-weight: bold;
    letter-spacing: 0;
  }

  .hscroll {
    height: 17px;
    flex: none;
    background: #f4f4f4;
    position: relative;
    margin-top: 1px;
    display: flex;
    align-items: center;
    padding: 0 8px;
  }

  .arr {
    width: 0;
    height: 0;
    border: 4px solid transparent;
    flex: none;
  }

  .arr.left {
    border-right: 4px solid #333;
    border-left: 0;
  }

  .arr.right {
    border-left: 4px solid #333;
    border-right: 0;
    margin-left: auto;
  }

  .thumb {
    margin-left: 7px;
    width: 195px;
    height: 15px;
    box-sizing: border-box;
    border: 1px solid #aaa;
    background: linear-gradient(#f0f0f0, #d4d4d4 50%, #c4c4c4);
    border-radius: 2px;
    text-align: center;
    font-size: 9px;
    line-height: 13px;
    color: #444;
  }

  .splitter {
    height: 13px;
    flex: none;
    display: flex;
    align-items: center;
    gap: 5px;
  }

  .splitter span {
    flex: 1;
    height: 1px;
    background: #bbb;
  }

  .splitter b {
    width: 54px;
    height: 5px;
    background: #d2d2d2;
    border: 1px solid #bbb;
    border-radius: 1px;
  }

  .sec {
    height: 23px;
    flex: none;
    box-sizing: border-box;
    display: flex;
    align-items: center;
    justify-content: space-between;
    background: linear-gradient(#f6f6f6 50%, #dadada 55%, #e2e2e2);
    border-bottom: 1px solid #888;
    padding-left: 7px;
  }

  .chev {
    width: 22px;
    height: 100%;
    border-left: 1px solid #aaa;
    box-shadow: inset 1px 0 #fff;
    display: flex;
    align-items: center;
    justify-content: center;
  }

  .vtool {
    width: 34px;
    flex: none;
    background: linear-gradient(90deg, #e4e4e4, #cecece);
    position: relative;
    overflow: hidden;
  }

  .vtool-stack {
    display: flex;
    flex-direction: column;
    align-items: center;
  }

  .vt {
    flex: none;
    display: flex;
    align-items: center;
    justify-content: center;
  }

  .big-a {
    font-family: "Liberation Serif", serif;
    font-weight: bold;
    font-size: 26px;
    line-height: 24px;
    color: #111;
  }

  .vt-line {
    width: 28px;
    height: 1px;
    margin-top: 9px;
    background: #aaa;
    box-shadow: 0 1px #eee;
  }

  .corner {
    position: absolute;
    left: 6px;
    bottom: 5px;
    border-width: 3px;
    border-left: 0;
    border-right-color: #222;
  }

  .viewport {
    flex: 1;
    min-width: 0;
    background: linear-gradient(#b3b5b7, #e7e8e9 88%);
    position: relative;
  }

  .model {
    display: block;
    width: 100%;
    height: 100%;
  }

  .axis {
    font-size: 12px;
    font-family: "Liberation Sans", Arial, sans-serif;
  }

  .rtool {
    width: 48px;
    flex: none;
    background: linear-gradient(90deg, #e2e2e2, #cccccc);
    position: relative;
    display: flex;
    flex-direction: column;
    align-items: center;
  }

  .rtool-icons {
    display: flex;
    flex-direction: column;
    align-items: center;
    padding-top: 8px;
  }

  .rbox {
    width: 30px;
    height: 30px;
    box-sizing: border-box;
    background: #fbfbfb;
    border: 1px solid #666;
    border-radius: 2px;
    display: flex;
    align-items: center;
    justify-content: center;
  }

  .rt {
    flex: none;
  }

  .r-first {
    margin-top: 2px;
  }

  .r-arrow {
    margin-top: 4px;
  }

  .rpair {
    width: 40px;
    display: flex;
    justify-content: space-between;
    margin-top: 10px;
  }

  .rtexts {
    display: flex;
    margin-top: 9px;
    width: 38px;
    justify-content: space-between;
  }

  .vcol {
    writing-mode: vertical-rl;
    display: flex;
    gap: 9px;
    white-space: nowrap;
    color: #222;
    line-height: 16px;
    font-size: 12px;
    letter-spacing: 0.1px;
  }

  .rline {
    width: 38px;
    height: 1px;
    background: #aaa;
    box-shadow: 0 1px #eee;
    margin-top: 10px;
  }

  /* windows taskbar */
  .taskbar {
    height: 30px;
    flex: none;
    border-top: 1px solid #111;
    box-sizing: border-box;
    background: linear-gradient(#2f3c3a, #394644);
    display: flex;
    align-items: flex-start;
    color: #eee;
    overflow: hidden;
    position: relative;
  }

  .orb {
    position: relative;
    flex: none;
    margin: 1px 0 0 8px;
    width: 38px;
    height: 38px;
    border-radius: 50%;
    background: radial-gradient(circle at 50% 30%, #6a90b8, #1c3a5c);
    border: 1px solid #8aa;
    box-sizing: border-box;
    display: grid;
    grid-template-columns: 10px 10px;
    grid-auto-rows: 9px;
    gap: 1px;
    justify-content: center;
    align-content: center;
  }

  .q1 {
    background: #e0502a;
  }

  .q2 {
    background: #7cb83a;
  }

  .q3 {
    background: #2a90e0;
  }

  .q4 {
    background: #f0c020;
  }

  .tb-ie {
    margin: 2px 0 0 25px;
    flex: none;
  }

  .tb-group {
    margin-left: 18px;
    display: flex;
    flex: none;
  }

  .tb-win {
    flex: none;
    height: 29px;
    box-sizing: border-box;
    border: 1px solid #667;
    border-bottom: 0;
    border-radius: 2px 2px 0 0;
    background: linear-gradient(100deg, #6d7573, #4e5856 50%, #3c4745);
    display: flex;
    align-items: flex-start;
    white-space: nowrap;
    padding: 3px 0 0 6px;
    overflow: hidden;
  }

  .tb-win span {
    line-height: 36px;
    margin-top: -3px;
    align-self: flex-start;
  }

  .w1 {
    width: 159px;
    padding-left: 8px;
    gap: 9px;
  }

  .w2 {
    width: 158px;
    padding-left: 8px;
    gap: 14px;
  }

  .tb-media {
    margin: 5px 0 0 19px;
    flex: none;
  }

  .tb-calc {
    margin: 5px 0 0 37px;
    flex: none;
  }

  .tb-cc {
    margin: 5px 0 0 35px;
    flex: none;
  }

  .tb-chrome {
    margin: 5px 0 0 33px;
    flex: none;
  }

  .tb-ff {
    margin: 5px 0 0 32px;
    flex: none;
  }

  .w3 {
    margin-left: 18px;
    width: 158px;
    gap: 9px;
    padding-left: 4px;
  }

  .w4 {
    margin-left: 4px;
    width: 158px;
    gap: 10px;
    padding-left: 4px;
  }

  .w5 {
    margin-left: 4px;
    width: 157px;
    gap: 10px;
    padding-left: 4px;
    background: linear-gradient(100deg, #5a7098, #7088b8);
    border-color: #9ab;
  }

  .tray {
    margin-left: auto;
    display: flex;
    align-items: center;
    height: 28px;
    gap: 6px;
  }

  .lang {
    margin-right: 11px;
    color: #ddd;
  }

  .tray-up {
    border: 3px solid transparent;
    border-bottom: 4px solid #ddd;
    border-top: 0;
    margin-right: 8px;
  }

  .clock {
    width: 64px;
    margin: 0 8px;
    display: flex;
    flex-direction: column;
    align-items: center;
    color: #eee;
    line-height: 15px;
    padding-top: 14px;
  }

  .desk {
    width: 13px;
    height: 29px;
    flex: none;
    margin-left: 1px;
    background: #454f4d;
    border: 1px solid #667;
    box-sizing: border-box;
  }
</style>
